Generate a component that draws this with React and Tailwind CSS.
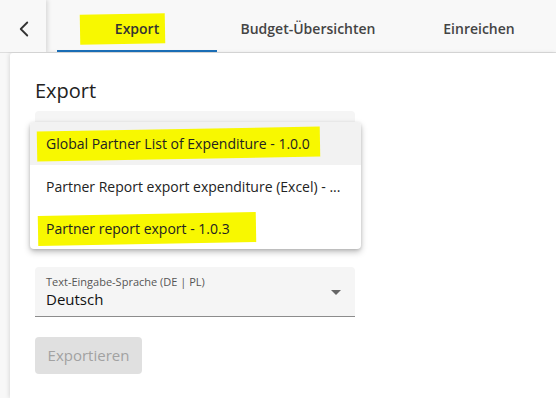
import { ChevronLeft } from 'lucide-react'

const tabs = [
  { label: 'Export', active: true, w: 'w-[160px]' },
  { label: 'Budget-Übersichten', w: 'w-[182px]' },
  { label: 'Einreichen', w: 'w-[160px]' },
]

function Marker({ children, className = '', inset = '-inset-x-[9px]' }) {
  return (
    <span className={`relative inline-block ${className}`}>
      <span className={`absolute ${inset} top-[-4px] bottom-[-5px] -rotate-1 bg-[#f8f800]`} />
      <span className="relative">{children}</span>
    </span>
  )
}

export default function App() {
  return (
    <div className="h-[398px] w-[556px] overflow-hidden bg-[#f8f8f8] font-['Open_Sans',sans-serif] text-[#222]">
      {/* Top bar */}
      <div className="flex h-[53px] overflow-hidden border-b border-[#dedede]">
        <button className="relative z-10 flex w-[46px] shrink-0 items-center justify-center bg-[#f8f8f8] pl-[2px] pt-[5px] shadow-[2px_0_4px_rgba(0,0,0,0.12)]">
          <ChevronLeft size={26} strokeWidth={1.7} className="text-[#333]" />
        </button>
        <div className="ml-[11px] flex shrink-0">
          {tabs.map(({ label, active, w }) => (
            <div
              key={label}
              className={`flex ${w} shrink-0 items-center justify-center border-b-2 pt-[6px] text-[14px] font-semibold ${
                active ? 'border-[#1a6db5] text-[#333]' : 'border-transparent text-[#444]'
              }`}
            >
              {active ? (
                <Marker inset="left-[-35px] right-[-6px]">{label}</Marker>
              ) : (
                label
              )}
            </div>
          ))}
        </div>
      </div>

      {/* Card */}
      <div className="ml-[10px] h-[345px] rounded-tl-[3px] bg-white pl-[25px] pt-[24px] shadow-[-1px_0_4px_rgba(0,0,0,0.12)]">
        <h2 className="text-[20px] leading-[28px] text-[#222]">Export</h2>

        <div className="relative mt-[6px] w-[320px]">
          <div className="h-[50px] rounded-t-[4px] bg-[#f5f5f5]" />
          {/* Open menu */}
          <div className="absolute left-[-5px] top-[11px] z-10 w-[331px] rounded-[4px] bg-white text-[14px] text-[#222] shadow-[0_3px_6px_rgba(0,0,0,0.25),0_1px_3px_rgba(0,0,0,0.12)]">
            <div className="flex h-[43px] items-center rounded-t-[4px] bg-[#f2f2f2] px-[16px]">
              <Marker inset="left-[-9px] right-[-10px]">Global Partner List of Expenditure - 1.0.0</Marker>
            </div>
            <div className="flex h-[42px] items-center px-[16px]">
              Partner Report export expenditure (Excel) - ...
            </div>
            <div className="flex h-[42px] items-center px-[16px]">
              <Marker inset="left-[-8px] right-[-26px]">Partner report export - 1.0.3</Marker>
            </div>
          </div>
        </div>

        <div className="relative mt-[106px] flex h-[50px] w-[320px] flex-col justify-center rounded-t-[4px] border-b border-[#8c8c8c] bg-[#f5f5f5] px-[11px]">
          <span className="text-[11px] leading-[14px] text-[#555]">Text-Eingabe-Sprache (DE | PL)</span>
          <span className="text-[15px] leading-[20px] text-[#111]">Deutsch</span>
          <span className="absolute right-[14px] top-[23px] h-0 w-0 border-x-[5px] border-t-[5px] border-x-transparent border-t-[#666]" />
        </div>

        <button className="mt-[20px] h-[37px] w-[107px] rounded-[4px] bg-[#e0e0e0] text-[15px] text-[#a2a2a2]">
          Exportieren
        </button>
      </div>
    </div>
  )
}
